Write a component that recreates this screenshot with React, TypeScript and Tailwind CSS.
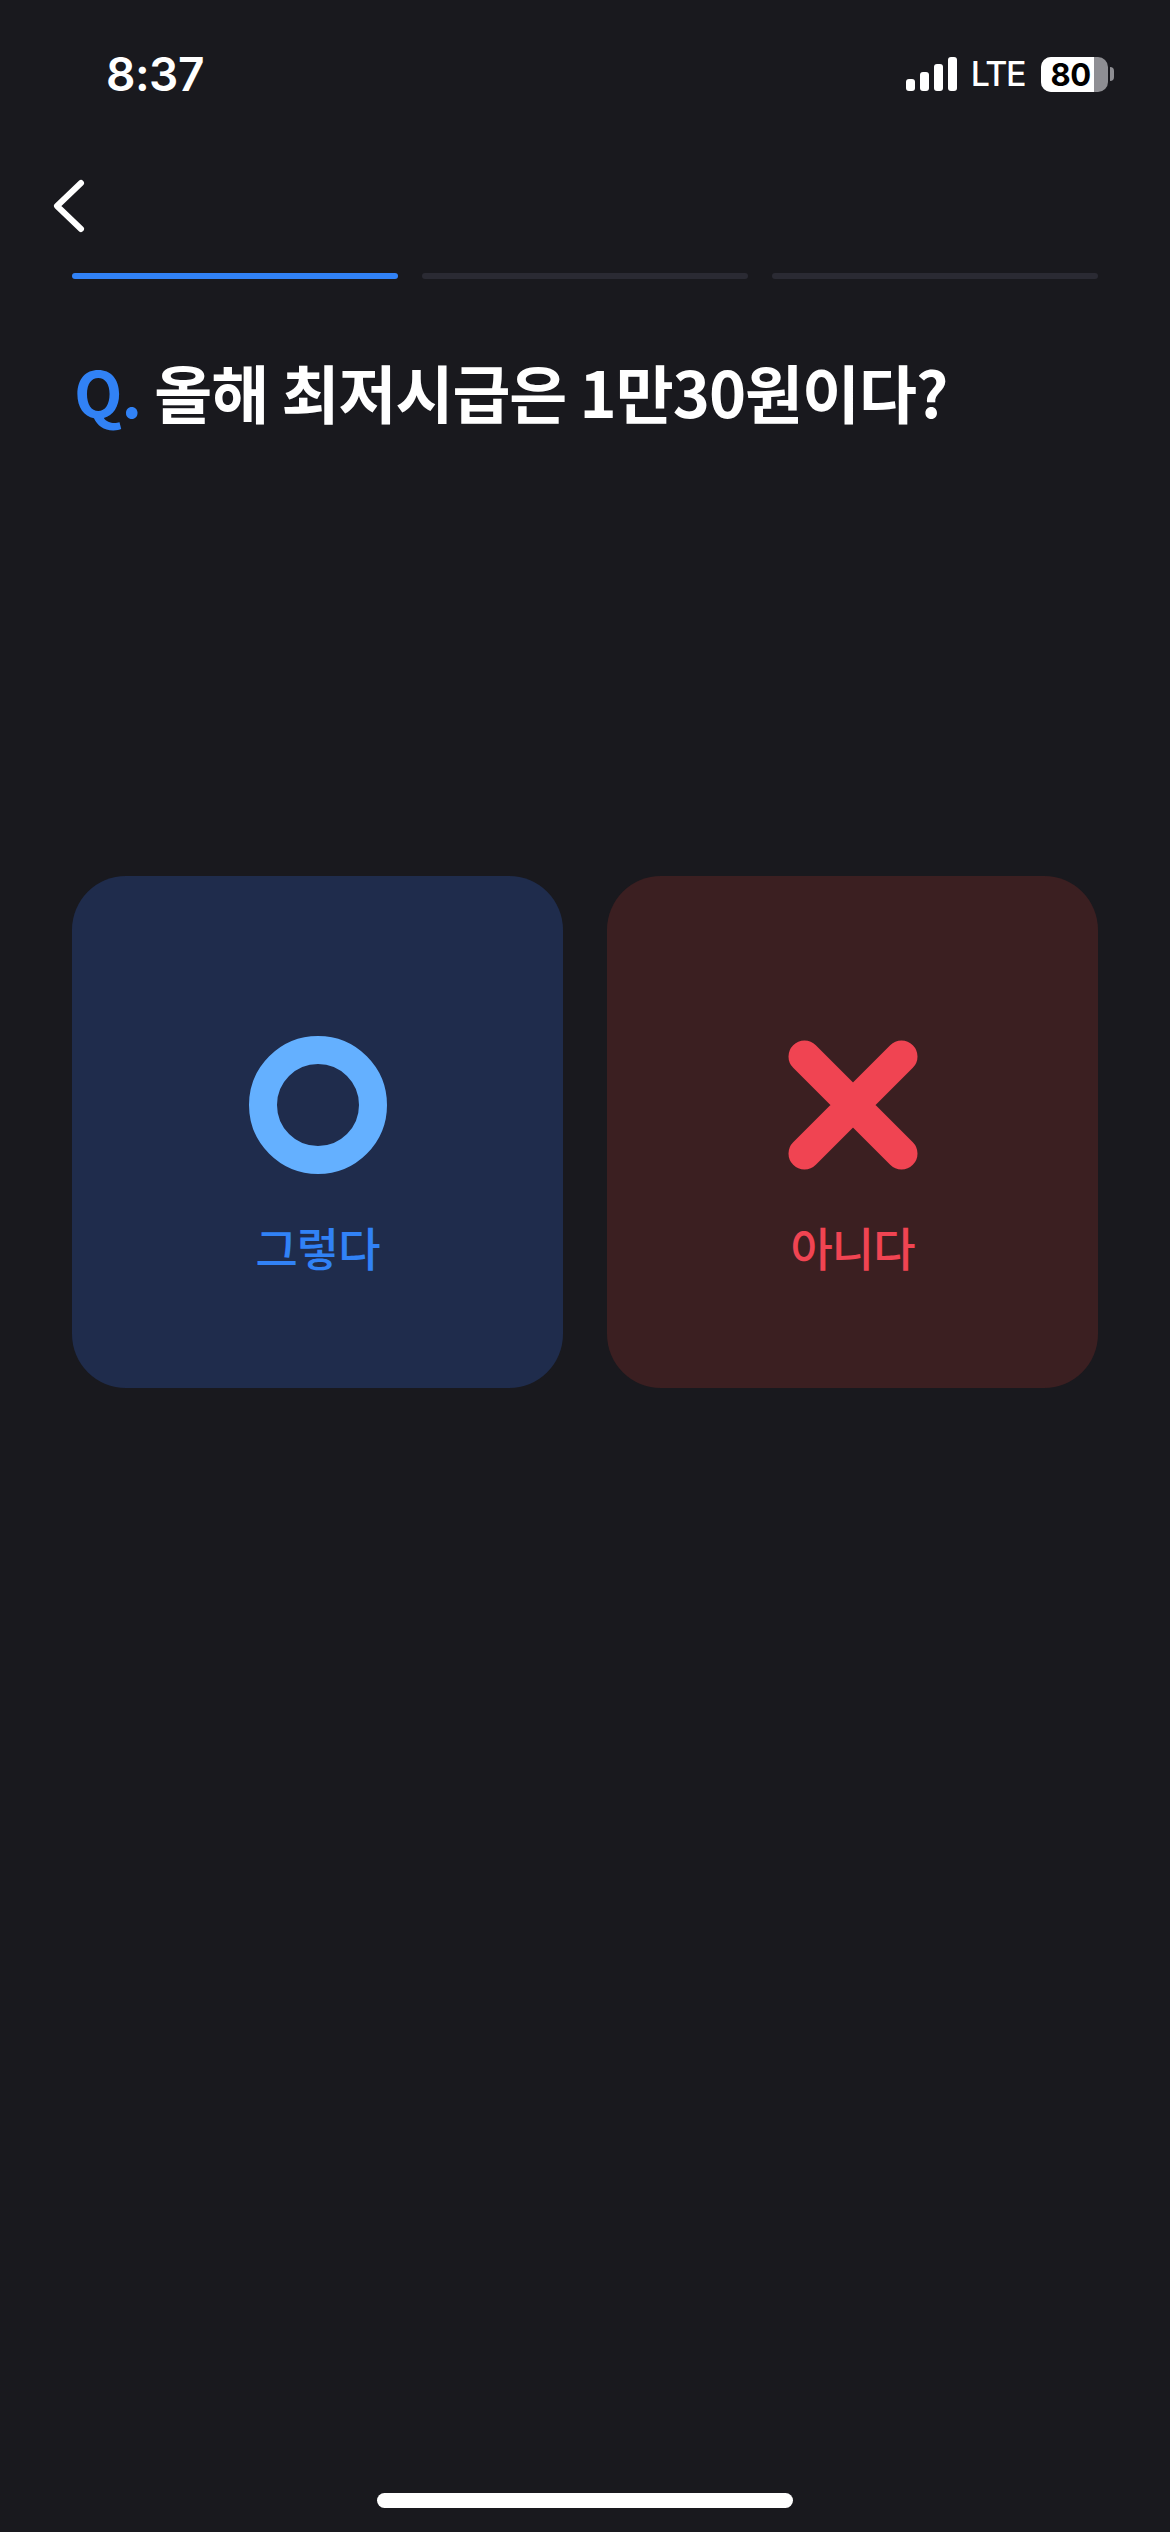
import React from "react";

const KR = { fontFamily: '"Noto Sans CJK KR", "Noto Sans", sans-serif' };
const UI = { fontFamily: 'Inter, "Noto Sans", sans-serif' };

function Signal() {
  return (
    <svg width="52" height="34" viewBox="0 0 52 34">
      <rect x="0" y="22" width="9" height="12" rx="3" fill="#fff" />
      <rect x="14" y="15" width="9" height="19" rx="3" fill="#fff" />
      <rect x="28" y="7" width="9" height="27" rx="3" fill="#fff" />
      <rect x="42" y="0" width="9" height="34" rx="3" fill="#fff" />
    </svg>
  );
}

export default function App() {
  return (
    <div className="w-[1170px] h-[2532px] bg-[#19191e] flex flex-col overflow-hidden">
      {/* status bar */}
      <div className="mt-[56px] h-[36px] flex items-center justify-between pl-[106px] pr-[56px]">
        <span style={UI} className="text-white text-[46px] leading-none font-semibold tracking-[-0.5px]">
          8:37
        </span>
        <div className="flex items-center">
          <Signal />
          <span style={UI} className="ml-[13px] text-white text-[34px] leading-none font-medium tracking-[-1.5px]">
            LTE
          </span>
          <div className="ml-[16px] relative w-[67px] h-[35px] rounded-[10px] overflow-hidden bg-[#8e8e93] flex">
            <div className="w-[53px] h-full bg-white" />
            <div className="absolute inset-0 flex items-center justify-center pr-[8px]">
              <span style={UI} className="text-black text-[31px] leading-none font-bold tracking-[-0.5px]">
                80
              </span>
            </div>
          </div>
          <div className="ml-[2px] w-[4px] h-[14px] rounded-r-full bg-[#8e8e93]" />
        </div>
      </div>

      {/* back */}
      <div className="mt-[85px] pl-[51px] h-[58px]">
        <svg width="36" height="58" viewBox="0 0 36 58" fill="none">
          <path d="M30 6 L6 29 L30 52" stroke="#fff" strokeWidth="6" strokeLinecap="round" strokeLinejoin="round" />
        </svg>
      </div>

      {/* progress */}
      <div className="mt-[38px] px-[72px] grid grid-cols-3 gap-[24px]">
        <div className="h-[6px] rounded-full bg-[#3182f6]" />
        <div className="h-[6px] rounded-full bg-[#2a2a33]" />
        <div className="h-[6px] rounded-full bg-[#2a2a33]" />
      </div>

      {/* question */}
      <div style={KR} className="mt-[80px] pl-[74px] text-[63px] leading-none font-bold text-white tracking-[-1px] whitespace-nowrap">
        <span className="text-[#3182f6]">Q.</span> 올해 최저시급은 1만30원이다?
      </div>

      {/* cards */}
      <div className="mt-[454px] px-[72px] grid grid-cols-2 gap-[44px]">
        <button className="h-[512px] rounded-[54px] bg-[#1f2c4c] flex flex-col items-center pt-[160px]">
          <div className="w-[138px] h-[138px] flex items-center justify-center">
            <div className="w-[138px] h-[138px] rounded-full border-[28px] border-[#64b0ff]" />
          </div>
          <span style={KR} className="mt-[49px] text-[46px] leading-none font-medium text-[#3182f6] tracking-[-1px]">
            그렇다
          </span>
        </button>
        <button className="h-[512px] rounded-[54px] bg-[#3b1f21] flex flex-col items-center pt-[160px]">
          <div className="w-[138px] h-[138px] flex items-center justify-center">
            <svg width="138" height="138" viewBox="0 0 138 138">
              <path
                d="M20.5 20.5 L117.5 117.5 M117.5 20.5 L20.5 117.5"
                stroke="#f04452"
                strokeWidth="32"
                strokeLinecap="round"
              />
            </svg>
          </div>
          <span style={KR} className="mt-[49px] text-[46px] leading-none font-medium text-[#f04452] tracking-[-1px]">
            아니다
          </span>
        </button>
      </div>

      {/* home indicator */}
      <div className="mt-auto mb-[24px] mx-auto w-[416px] h-[15px] rounded-full bg-white" />
    </div>
  );
}
